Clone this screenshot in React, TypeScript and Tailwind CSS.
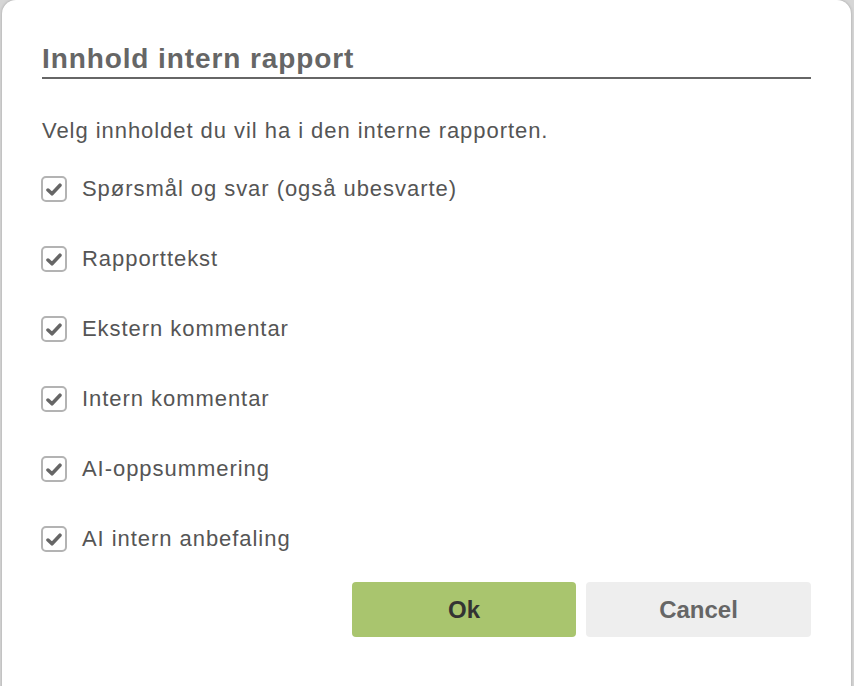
const items = [
  "Spørsmål og svar (også ubesvarte)",
  "Rapporttekst",
  "Ekstern kommentar",
  "Intern kommentar",
  "AI-oppsummering",
  "AI intern anbefaling",
];

function CheckMark() {
  return (
    <svg width="16" height="13" viewBox="0 0 16 13" fill="none">
      <polyline
        points="2,7 6,10.8 14,2.2"
        stroke="#666"
        strokeWidth="3.5"
        strokeLinecap="round"
        strokeLinejoin="round"
      />
    </svg>
  );
}

export default function App() {
  return (
    <div className="h-[686px] w-[854px] overflow-hidden bg-[#d6d6d6] font-['Liberation_Sans',Arial,sans-serif]">
      <div className="ml-[2px] mr-[3px] h-[700px] rounded-t-[14px] bg-white px-[40px] pt-[43px] shadow-[0_0_3px_rgba(0,0,0,0.25)]">
        <h2 className="border-b-2 border-[#666] pb-[2px] text-[28px] font-bold leading-[32px] tracking-[0.9px] text-[#666]">
          Innhold intern rapport
        </h2>
        <p className="mt-[39px] text-[22px] leading-[26px] tracking-[0.95px] text-[#555]">
          Velg innholdet du vil ha i den interne rapporten.
        </p>
        <ul className="mt-[32px] flex flex-col gap-[44px]">
          {items.map((label) => (
            <li key={label} className="flex h-[26px] items-center">
              <span className="ml-[-1px] flex h-[26px] w-[26px] items-center justify-center rounded-[5px] border-2 border-[#b3b3b3] bg-white">
                <CheckMark />
              </span>
              <span className="ml-[15px] text-[22px] leading-[26px] tracking-[0.95px] text-[#555]">
                {label}
              </span>
            </li>
          ))}
        </ul>
        <div className="mt-[30px] flex justify-end gap-[10px]">
          <button className="h-[55px] w-[224px] rounded-[4px] bg-[#a9c56e] text-[24px] font-bold text-[#333]">
            Ok
          </button>
          <button className="h-[55px] w-[225px] rounded-[4px] bg-[#eeeeee] text-[24px] font-bold text-[#666]">
            Cancel
          </button>
        </div>
      </div>
    </div>
  );
}
